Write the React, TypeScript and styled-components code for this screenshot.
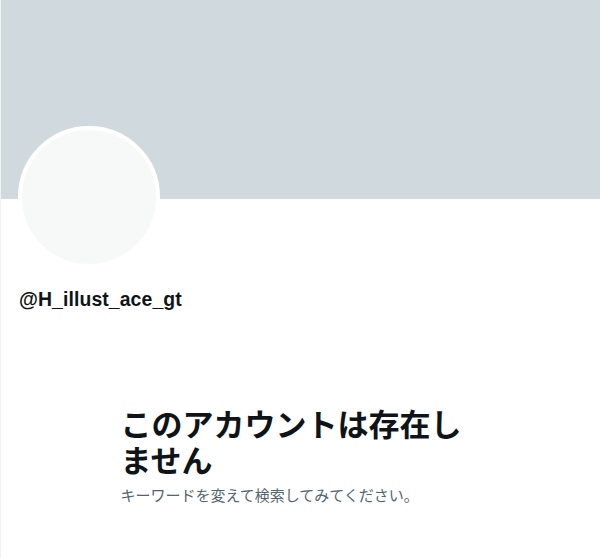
import React from "react";
import styled, { createGlobalStyle } from "styled-components";

const Global = createGlobalStyle`
  html, body { margin: 0; padding: 0; background: #ffffff; }
  body { font-family: "Liberation Sans", "Noto Sans CJK JP", sans-serif; }
  * { box-sizing: border-box; }
`;

const Column = styled.main`
  width: 600px;
  min-height: 558px;
  border-left: 1px solid #eff3f4;
  display: flex;
  flex-direction: column;
`;

const Banner = styled.div`
  height: 199px;
  background: #cfd9de;
`;

const ProfileHeader = styled.section`
  padding: 0 16px 0 17px;
  display: flex;
  flex-direction: column;
`;

const Avatar = styled.div`
  width: 142px;
  height: 142px;
  margin-top: -73px;
  border-radius: 50%;
  border: 4px solid #ffffff;
  background: #f7f9f9;
`;

const Handle = styled.div`
  margin-top: 19px;
  padding-left: 1px;
  font-family: "Liberation Sans", "Noto Sans", sans-serif;
  font-weight: 700;
  font-size: 19.4px;
  letter-spacing: 0.1px;
  line-height: 24px;
  color: #0f1419;
`;

const EmptyState = styled.section`
  width: 400px;
  margin: 74px auto 0;
  padding: 20px;
  display: flex;
  flex-direction: column;
  gap: 8px;
`;

const Title = styled.h1`
  margin: 0;
  font-family: "Noto Sans CJK JP", sans-serif;
  font-weight: 700;
  font-size: 31px;
  line-height: 36px;
  color: #0f1419;
`;

const Subtitle = styled.p`
  margin: 0;
  font-family: "Noto Sans CJK JP", sans-serif;
  font-size: 15px;
  line-height: 20px;
  color: #536471;
`;

export default function App() {
  return (
    <>
      <Global />
      <Column>
        <Banner />
        <ProfileHeader>
          <Avatar />
          <Handle>@H_illust_ace_gt</Handle>
        </ProfileHeader>
        <EmptyState>
          <Title>このアカウントは存在しません</Title>
          <Subtitle>キーワードを変えて検索してみてください。</Subtitle>
        </EmptyState>
      </Column>
    </>
  );
}
